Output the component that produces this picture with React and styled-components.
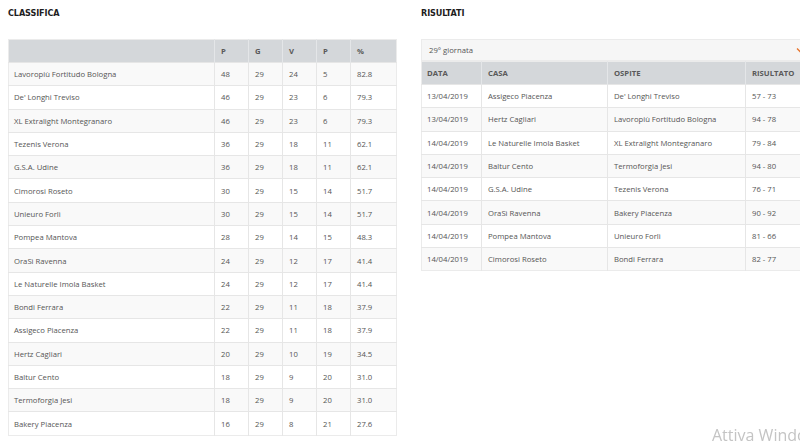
import React from 'react';
import styled, { createGlobalStyle } from 'styled-components';

const GlobalStyle = createGlobalStyle`
    html, body {
        margin: 0;
        padding: 0;
        background: #ffffff;
        overflow: hidden;
    }
    body {
        font-family: "Open Sans", "Liberation Sans", sans-serif;
        color: #555555;
    }
`;

const Page = styled.div`
    display: flex;
    gap: 24px;
    padding: 0 8px;
    width: 900px;
`;
const Column = styled.section`
    width: ${(props) => props.width}px;
    flex-shrink: 0;
`;
const Title = styled.h2`
    margin: 0;
    height: 39px;
    box-sizing: border-box;
    padding-top: 7px;
    font-family: "Liberation Sans Narrow", "DejaVu Sans Condensed", sans-serif;
    font-weight: 700;
    font-size: 9px;
    line-height: 12px;
    color: #1e1e1e;
    letter-spacing: -0.1px;
    text-transform: uppercase;
`;
const Table = styled.table`
    width: 100%;
    border-collapse: collapse;
    table-layout: fixed;
    font-size: 7.7px;
    border: 1px solid #ebebeb;
`;
const HeadCell = styled.th`
    background: #d4d7da;
    height: 22px;
    padding: 0 6px;
    text-align: left;
    font-weight: 700;
    color: #595959;
    border-left: 1px solid #e4e6e8;
    &:first-child {
        border-left: none;
        padding-left: 5px;
    }
`;
const Row = styled.tr`
    height: 23.3px;
    background: ${(props) => (props.odd ? '#f9f9f9' : '#ffffff')};
    border-top: 1px solid #e6e6e6;
`;
const Cell = styled.td`
    padding: 0 6px;
    border-left: 1px solid #e6e6e6;
    white-space: nowrap;
    overflow: hidden;
    &:first-child {
        border-left: none;
        padding-left: 5px;
    }
`;
const Select = styled.div`
    display: flex;
    align-items: center;
    justify-content: space-between;
    height: 20px;
    padding: 0 10px 0 7px;
    background: #f6f6f6;
    border: 1px solid #ebebeb;
    font-size: 7.7px;
    color: #555555;
`;
const Chevron = styled.svg`
    width: 8px;
    height: 6px;
    flex-shrink: 0;
`;
const Watermark = styled.div`
    position: fixed;
    left: 712px;
    top: 424px;
    font-family: "Open Sans", "Liberation Sans", sans-serif;
    font-size: 16px;
    color: #c4c4c4;
    white-space: nowrap;
`;

const standings = [
    ['Lavoropiù Fortitudo Bologna', 48, 29, 24, 5, '82.8'],
    ["De' Longhi Treviso", 46, 29, 23, 6, '79.3'],
    ['XL Extralight Montegranaro', 46, 29, 23, 6, '79.3'],
    ['Tezenis Verona', 36, 29, 18, 11, '62.1'],
    ['G.S.A. Udine', 36, 29, 18, 11, '62.1'],
    ['Cimorosi Roseto', 30, 29, 15, 14, '51.7'],
    ['Unieuro Forlì', 30, 29, 15, 14, '51.7'],
    ['Pompea Mantova', 28, 29, 14, 15, '48.3'],
    ['OraSì Ravenna', 24, 29, 12, 17, '41.4'],
    ['Le Naturelle Imola Basket', 24, 29, 12, 17, '41.4'],
    ['Bondi Ferrara', 22, 29, 11, 18, '37.9'],
    ['Assigeco Piacenza', 22, 29, 11, 18, '37.9'],
    ['Hertz Cagliari', 20, 29, 10, 19, '34.5'],
    ['Baltur Cento', 18, 29, 9, 20, '31.0'],
    ['Termoforgia Jesi', 18, 29, 9, 20, '31.0'],
    ['Bakery Piacenza', 16, 29, 8, 21, '27.6'],
];

const results = [
    ['13/04/2019', 'Assigeco Piacenza', "De' Longhi Treviso", '57 - 73'],
    ['13/04/2019', 'Hertz Cagliari', 'Lavoropiù Fortitudo Bologna', '94 - 78'],
    ['14/04/2019', 'Le Naturelle Imola Basket', 'XL Extralight Montegranaro', '79 - 84'],
    ['14/04/2019', 'Baltur Cento', 'Termoforgia Jesi', '94 - 80'],
    ['14/04/2019', 'G.S.A. Udine', 'Tezenis Verona', '76 - 71'],
    ['14/04/2019', 'OraSì Ravenna', 'Bakery Piacenza', '90 - 92'],
    ['14/04/2019', 'Pompea Mantova', 'Unieuro Forlì', '81 - 66'],
    ['14/04/2019', 'Cimorosi Roseto', 'Bondi Ferrara', '82 - 77'],
];

export default function App() {
    return (
        <>
            <GlobalStyle />
            <Page>
                <Column width={389}>
                    <Title>Classifica</Title>
                    <Table>
                        <colgroup>
                            <col style={{ width: 206 }} />
                            <col style={{ width: 34 }} />
                            <col style={{ width: 34 }} />
                            <col style={{ width: 34 }} />
                            <col style={{ width: 34 }} />
                            <col />
                        </colgroup>
                        <thead>
                            <tr>
                                <HeadCell />
                                <HeadCell>P</HeadCell>
                                <HeadCell>G</HeadCell>
                                <HeadCell>V</HeadCell>
                                <HeadCell>P</HeadCell>
                                <HeadCell>%</HeadCell>
                            </tr>
                        </thead>
                        <tbody>
                            {standings.map((team, i) => (
                                <Row key={team[0]} odd={i % 2 === 0}>
                                    {team.map((value, j) => (
                                        <Cell key={j}>{value}</Cell>
                                    ))}
                                </Row>
                            ))}
                        </tbody>
                    </Table>
                </Column>
                <Column width={394}>
                    <Title>Risultati</Title>
                    <Select>
                        <span>29° giornata</span>
                        <Chevron viewBox="0 0 8 6">
                            <path d="M1 1.5 L4 4.5 L7 1.5" fill="none" stroke="#e8742c" strokeWidth="1.3" />
                        </Chevron>
                    </Select>
                    <Table>
                        <colgroup>
                            <col style={{ width: 60 }} />
                            <col style={{ width: 126 }} />
                            <col style={{ width: 138 }} />
                            <col />
                        </colgroup>
                        <thead>
                            <tr>
                                <HeadCell>DATA</HeadCell>
                                <HeadCell>CASA</HeadCell>
                                <HeadCell>OSPITE</HeadCell>
                                <HeadCell>RISULTATO</HeadCell>
                            </tr>
                        </thead>
                        <tbody>
                            {results.map((game, i) => (
                                <Row key={game[1]} odd={i % 2 === 1}>
                                    {game.map((value, j) => (
                                        <Cell key={j}>{value}</Cell>
                                    ))}
                                </Row>
                            ))}
                        </tbody>
                    </Table>
                </Column>
            </Page>
            <Watermark>Attiva Windows</Watermark>
        </>
    );
}
